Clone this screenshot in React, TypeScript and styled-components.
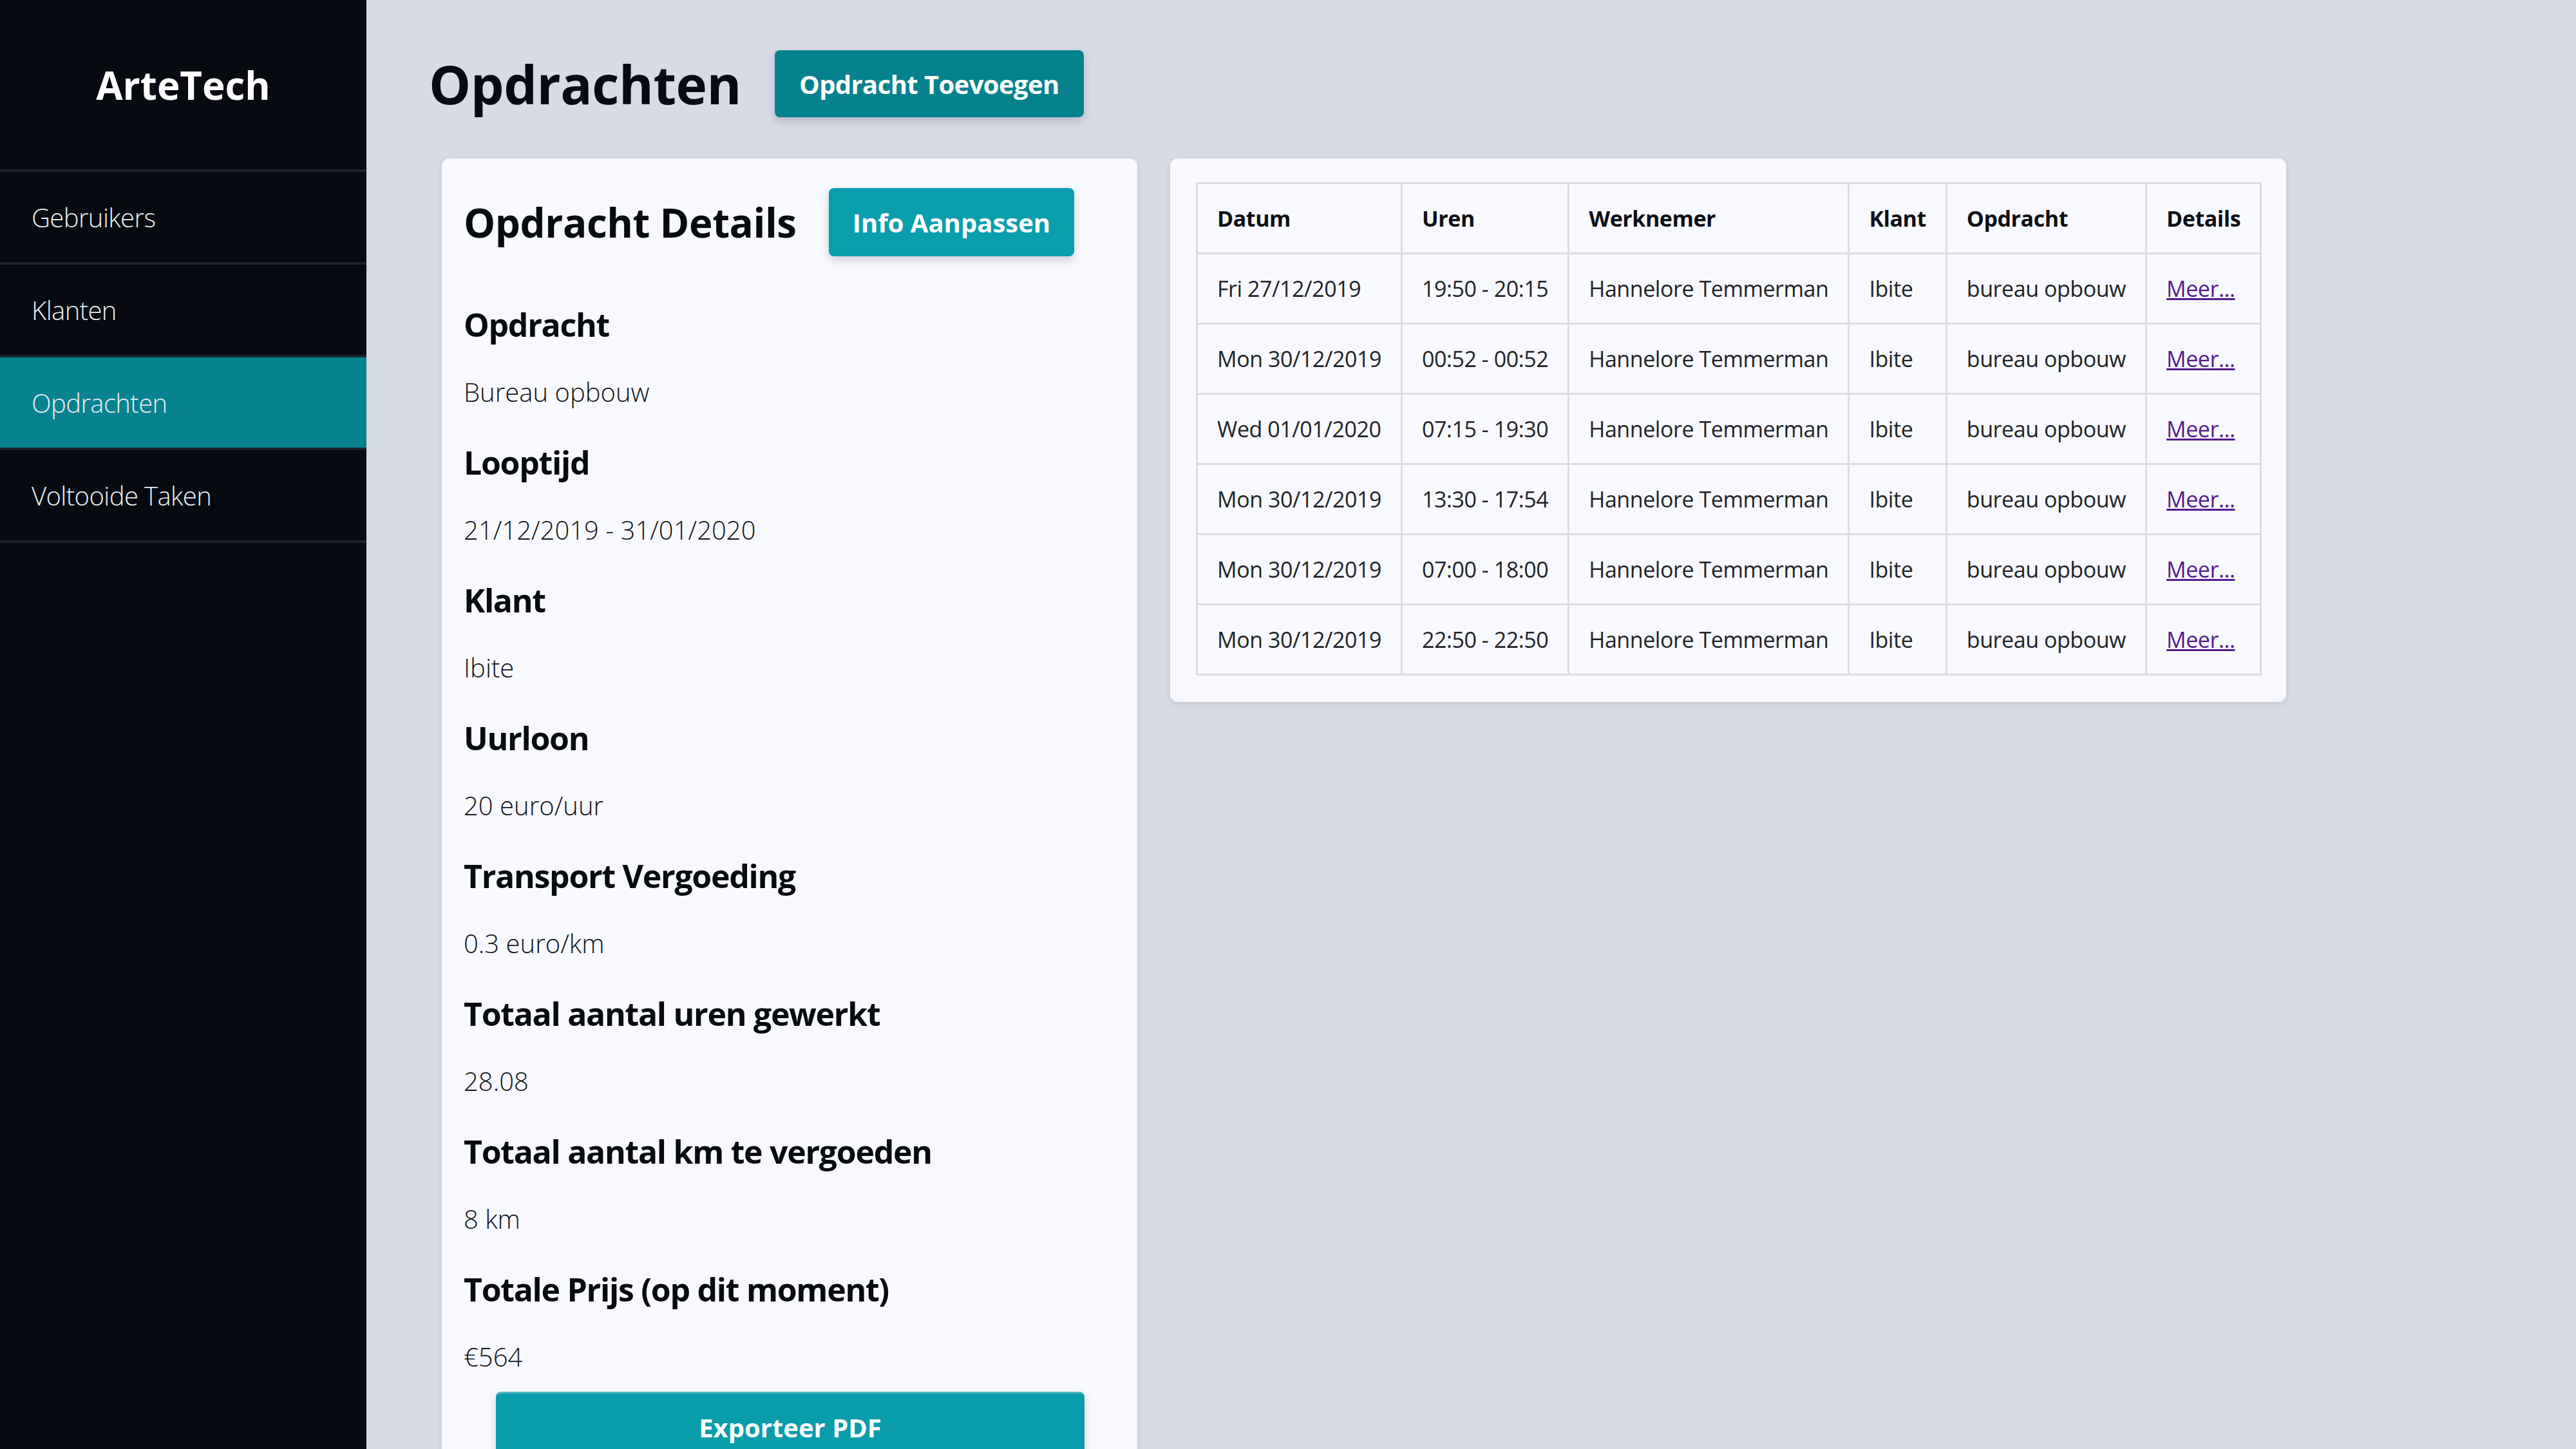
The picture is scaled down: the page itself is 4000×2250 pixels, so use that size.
import React from "react";
import styled, { createGlobalStyle } from "styled-components";

const GlobalStyle = createGlobalStyle`
  html, body { margin: 0; padding: 0; }
  body {
    font-family: "Open Sans", "Noto Sans", "Liberation Sans", sans-serif;
    background: #d8dae5;
    color: #070b11;
  }
  * { box-sizing: border-box; }
`;

const Shell = styled.div`
  display: flex;
  min-height: 100vh;
`;

const Sidebar = styled.aside`
  width: 569px;
  flex-shrink: 0;
  background: #070b11;
  display: flex;
  flex-direction: column;
`;

const Brand = styled.div`
  height: 263px;
  display: flex;
  align-items: center;
  justify-content: center;
  color: #ffffff;
  font-size: 60px;
  font-weight: 700;
`;

const NavList = styled.ul`
  list-style: none;
  margin: 0;
  padding: 0;
  border-bottom: 4px solid #1b2530;
`;

const NavItem = styled.li<{ $active?: boolean }>`
  height: 144px;
  border-top: 4px solid #1b2530;
  display: flex;
  align-items: center;
  padding-left: 49px;
  font-size: 40px;
  font-weight: 300;
  letter-spacing: -0.015em;
  color: #eceef2;
  background: ${(p) => (p.$active ? "#06838f" : "transparent")};
`;

const Main = styled.main`
  flex: 1;
  padding: 74px 0 0 97px;
`;

const TopBar = styled.div`
  display: flex;
  align-items: center;
  gap: 52px;
`;

const Title = styled.h1`
  margin: 0;
  font-size: 82px;
  font-weight: 700;
  line-height: normal;
  letter-spacing: -0.006em;
`;

const Button = styled.button<{ $tone?: "dark" | "light" }>`
  border: none;
  border-radius: 8px;
  color: #ffffff;
  font-family: inherit;
  font-size: 40px;
  font-weight: 700;
  padding: 0 38px;
  background: ${(p) => (p.$tone === "dark" ? "#06828e" : "#0a9ead")};
  box-shadow: 0 6px 14px rgba(20, 30, 50, 0.18);
  cursor: pointer;
`;

const AddButton = styled(Button)`
  height: 104px;
  letter-spacing: -0.015em;
`;

const EditButton = styled(Button)`
  height: 106px;
  padding: 0 37px;
`;

const ExportButton = styled(Button)`
  display: block;
  height: 108px;
  margin: 27px 48px 0 50px;
  width: calc(100% - 98px);
  background: #099cab;
  border-top: 3px solid #55b6c1;
`;

const Cards = styled.div`
  display: flex;
  align-items: flex-start;
  gap: 51px;
  margin: 60px 0 0 20px;
`;

const Card = styled.section`
  background: #f8f9fe;
  border-radius: 12px;
  box-shadow: 0 3px 10px rgba(30, 40, 70, 0.1);
`;

const DetailsCard = styled(Card)`
  width: 1080px;
  padding: 46px 34px 0;
  min-height: 2010px;
`;

const CardHeader = styled.div`
  display: flex;
  align-items: center;
  gap: 50px;
`;

const CardTitle = styled.h2`
  margin: 0;
  font-size: 62px;
  font-weight: 700;
  line-height: normal;
  letter-spacing: -0.008em;
`;

const FieldList = styled.dl`
  display: flex;
  flex-direction: column;
  gap: 48px;
  margin: 72px 0 0;
`;

const Field = styled.div`
  display: flex;
  flex-direction: column;
`;

const FieldLabel = styled.dt`
  margin: 0;
  font-size: 50px;
  font-weight: 700;
  line-height: normal;
  letter-spacing: -0.026em;
`;

const FieldValue = styled.dd`
  margin: 43px 0 0;
  font-size: 40px;
  font-weight: 300;
  line-height: normal;
  color: #111418;
`;

const TableCard = styled(Card)`
  padding: 37px 38px 41px 40px;
`;

const Table = styled.table`
  border-collapse: collapse;
  font-size: 34px;
  letter-spacing: -0.013em;
`;

const Th = styled.th`
  border: 3px solid #dcdcde;
  padding: 30px 30px;
  text-align: left;
  font-weight: 700;
  white-space: nowrap;
  line-height: normal;
  color: #0b0f14;
`;

const Td = styled.td`
  border: 3px solid #dcdcde;
  padding: 30px 30px;
  text-align: left;
  white-space: nowrap;
  line-height: normal;
  color: #202327;
`;

const MoreLink = styled.a`
  color: #551a8b;
  text-decoration: underline;
`;

const navItems = ["Gebruikers", "Klanten", "Opdrachten", "Voltooide Taken"];

const fields: [string, string][] = [
  ["Opdracht", "Bureau opbouw"],
  ["Looptijd", "21/12/2019 - 31/01/2020"],
  ["Klant", "Ibite"],
  ["Uurloon", "20 euro/uur"],
  ["Transport Vergoeding", "0.3 euro/km"],
  ["Totaal aantal uren gewerkt", "28.08"],
  ["Totaal aantal km te vergoeden", "8 km"],
  ["Totale Prijs (op dit moment)", "€564"],
];

const rows: [string, string][] = [
  ["Fri 27/12/2019", "19:50 - 20:15"],
  ["Mon 30/12/2019", "00:52 - 00:52"],
  ["Wed 01/01/2020", "07:15 - 19:30"],
  ["Mon 30/12/2019", "13:30 - 17:54"],
  ["Mon 30/12/2019", "07:00 - 18:00"],
  ["Mon 30/12/2019", "22:50 - 22:50"],
];

export default function App() {
  return (
    <>
      <GlobalStyle />
      <Shell>
        <Sidebar>
          <Brand>ArteTech</Brand>
          <NavList>
            {navItems.map((item) => (
              <NavItem key={item} $active={item === "Opdrachten"}>
                {item}
              </NavItem>
            ))}
          </NavList>
        </Sidebar>
        <Main>
          <TopBar>
            <Title>Opdrachten</Title>
            <AddButton $tone="dark">Opdracht Toevoegen</AddButton>
          </TopBar>
          <Cards>
            <DetailsCard>
              <CardHeader>
                <CardTitle>Opdracht Details</CardTitle>
                <EditButton>Info Aanpassen</EditButton>
              </CardHeader>
              <FieldList>
                {fields.map(([label, value]) => (
                  <Field key={label}>
                    <FieldLabel>{label}</FieldLabel>
                    <FieldValue>{value}</FieldValue>
                  </Field>
                ))}
              </FieldList>
              <ExportButton>Exporteer PDF</ExportButton>
            </DetailsCard>
            <TableCard>
              <Table>
                <thead>
                  <tr>
                    <Th>Datum</Th>
                    <Th>Uren</Th>
                    <Th>Werknemer</Th>
                    <Th>Klant</Th>
                    <Th>Opdracht</Th>
                    <Th>Details</Th>
                  </tr>
                </thead>
                <tbody>
                  {rows.map(([date, hours], i) => (
                    <tr key={i}>
                      <Td>{date}</Td>
                      <Td>{hours}</Td>
                      <Td>Hannelore Temmerman</Td>
                      <Td>Ibite</Td>
                      <Td>bureau opbouw</Td>
                      <Td>
                        <MoreLink href="#">Meer...</MoreLink>
                      </Td>
                    </tr>
                  ))}
                </tbody>
              </Table>
            </TableCard>
          </Cards>
        </Main>
      </Shell>
    </>
  );
}
